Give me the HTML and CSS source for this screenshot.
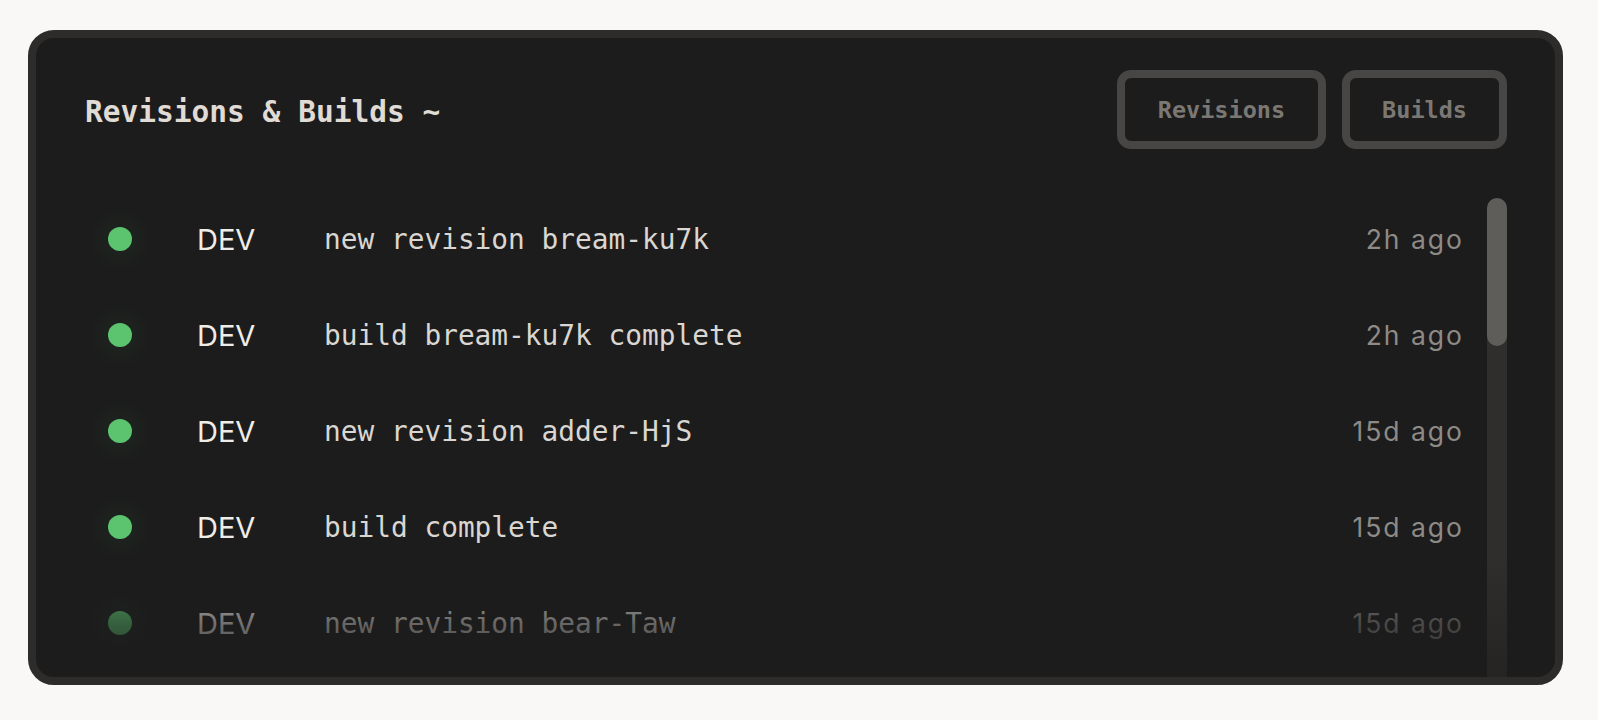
FILE: index.html
```html
<!DOCTYPE html>
<html lang="en">
<head>
<meta charset="utf-8">
<title>Revisions &amp; Builds</title>
<link rel="stylesheet" href="styles.css">
</head>
<body>
<main class="page">
  <section class="card">
    <header class="card-head">
      <h1 class="title">Revisions &amp; Builds ~</h1>
      <div class="tabs">
        <button class="tab tab-rev">Revisions</button>
        <button class="tab">Builds</button>
      </div>
    </header>
    <div class="list-wrap">
      <div class="list-area">
        <ul class="list">
          <li class="row"><span class="dot"></span><span class="env">DEV</span><span class="msg">new revision bream-ku7k</span><span class="time">2h ago</span></li>
          <li class="row"><span class="dot"></span><span class="env">DEV</span><span class="msg">build bream-ku7k complete</span><span class="time">2h ago</span></li>
          <li class="row"><span class="dot"></span><span class="env">DEV</span><span class="msg">new revision adder-HjS</span><span class="time">15d ago</span></li>
          <li class="row"><span class="dot"></span><span class="env">DEV</span><span class="msg">build complete</span><span class="time">15d ago</span></li>
          <li class="row"><span class="dot"></span><span class="env">DEV</span><span class="msg">new revision bear-Taw</span><span class="time">15d ago</span></li>
        </ul>
        <div class="fade"></div>
      </div>
      <div class="scrollbar"><div class="thumb"></div></div>
    </div>
  </section>
</main>
</body>
</html>
```

FILE: styles.css
```css
* { box-sizing: border-box; }

html, body {
  margin: 0;
  padding: 0;
  background: #f9f8f6;
}

.page {
  padding: 30px 35px 35px 28px;
  height: 720px;
}

.card {
  height: 655px;
  background: #1c1c1c;
  border: 8px solid #2e2c2a;
  border-radius: 26px;
  display: flex;
  flex-direction: column;
  overflow: hidden;
}

.card-head {
  display: flex;
  align-items: center;
  justify-content: space-between;
  padding: 32px 48px 0 49px;
}

.title {
  margin: 4px 0 0;
  font-family: "DejaVu Sans Mono", "Liberation Mono", monospace;
  font-weight: 700;
  font-size: 29.5px;
  color: #e0dbd5;
}

.tabs {
  display: flex;
  gap: 16px;
}

.tab {
  height: 79px;
  padding: 0 32px;
  background: transparent;
  border: 8px solid #484644;
  border-radius: 14px;
  font-family: "DejaVu Sans Mono", "Liberation Mono", monospace;
  font-weight: 700;
  font-size: 23.5px;
  color: #7b7874;
}

.tab-rev { padding: 0 33px; }

.list-wrap {
  flex: 1;
  min-height: 0;
  margin: 49px 48px 0 48px;
  display: flex;
}

.list-area {
  position: relative;
  flex: 1;
  overflow: hidden;
}

.list {
  list-style: none;
  margin: 0;
  padding: 0;
}

.row {
  height: 82px;
  margin-bottom: 14px;
  display: grid;
  grid-template-columns: 89px 127px 1fr auto;
  align-items: center;
  padding: 0 23px 0 24px;
}

.dot {
  width: 24px;
  height: 24px;
  border-radius: 50%;
  background: #5cc46f;
  box-shadow: 0 0 22px 8px rgba(92, 196, 111, 0.07);
}

.env {
  font-family: Inter, "Noto Sans", sans-serif;
  font-weight: 400;
  font-size: 29px;
  color: #f0ede9;
}

.msg {
  font-family: "DejaVu Sans Mono", "Liberation Mono", monospace;
  font-size: 27.8px;
  color: #dad6d1;
}

.time {
  font-family: Inter, "Noto Sans", sans-serif;
  font-size: 26.5px;
  letter-spacing: 2px;
  color: #8e8a86;
  text-align: right;
}

.fade {
  position: absolute;
  left: 0;
  right: 0;
  bottom: 0;
  height: 118px;
  pointer-events: none;
  background: linear-gradient(rgba(28, 28, 28, 0) 0%, rgba(28, 28, 28, 0.6) 55%, rgba(28, 28, 28, 0.9) 100%);
}

.scrollbar {
  width: 20px;
  flex: none;
  border-radius: 10px 10px 0 0;
  background: linear-gradient(#302e2c 0%, #302e2c 75%, #252423 100%);
}

.thumb {
  height: 148px;
  border-radius: 10px;
  background: #5f5d5a;
}
```
